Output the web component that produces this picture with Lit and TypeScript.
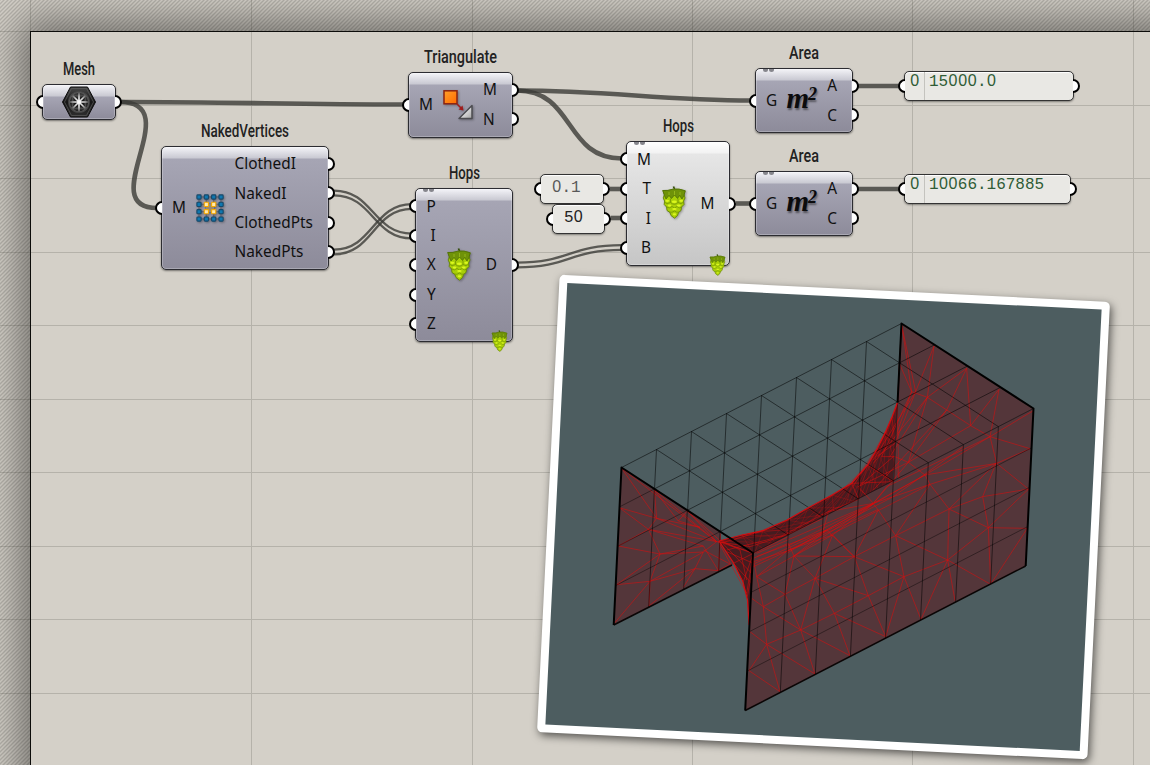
import { LitElement, html, svg, css, nothing } from "lit";
import { customElement, property } from "lit/decorators.js";

type Pt = [number, number];

interface GraphNode {
  title: string;
  titleWidth: number;
  x: number;
  y: number;
  w: number;
  h: number;
  inputs: string[];
  outputs: string[];
  icon: string;
  light?: boolean;
  ticks?: boolean;
  badge?: boolean;
}

interface Panel {
  x: number;
  y: number;
  w: number;
  index?: string;
  value: string;
  tone: string;
}

const NODES: GraphNode[] = [
  { title: "Mesh", titleWidth: 32, x: 41.5, y: 84, w: 74.5, h: 36, inputs: [""], outputs: [""], icon: "mesh" },
  { title: "NakedVertices", titleWidth: 88, x: 161, y: 146, w: 168, h: 124, inputs: ["M"], outputs: ["ClothedI", "NakedI", "ClothedPts", "NakedPts"], icon: "verts" },
  { title: "Triangulate", titleWidth: 73, x: 408, y: 72, w: 105, h: 65.5, inputs: ["M"], outputs: ["M", "N"], icon: "tri" },
  { title: "Hops", titleWidth: 31, x: 415.4, y: 188, w: 97.5, h: 154.4, inputs: ["P", "I", "X", "Y", "Z"], outputs: ["D"], icon: "hop", ticks: true, badge: true },
  { title: "Hops", titleWidth: 31, x: 626, y: 141, w: 104.4, h: 125, inputs: ["M", "T", "I", "B"], outputs: ["M"], icon: "hop", light: true, ticks: true, badge: true },
  { title: "Area", titleWidth: 30, x: 755, y: 68, w: 98, h: 65, inputs: ["G"], outputs: ["A", "C"], icon: "area", ticks: true },
  { title: "Area", titleWidth: 30, x: 755, y: 171, w: 98, h: 65, inputs: ["G"], outputs: ["A", "C"], icon: "area", ticks: true },
];

const PANELS: Panel[] = [
  { x: 903.5, y: 71, w: 170, index: "0", value: "15000.0", tone: "green" },
  { x: 903.5, y: 174, w: 167, index: "0", value: "10066.167885", tone: "green" },
  { x: 540.4, y: 174, w: 64, value: "0.1", tone: "grey" },
  { x: 552.4, y: 203.5, w: 53, value: "50", tone: "ink" },
];

const WIRES = [
  "M122,102 C240,102 290,104.5 404,104.5",
  "M120,102 C188,102 93,208 157,208",
  "M517,90.5 C610,90.5 660,100.5 752,100.5",
  "M517,90.5 C575,90.5 564,158.5 622,158.5",
  "M858,86 H899",
  "M858,189 H899",
  "M736,203.5 H751",
  "M610,189 H621",
  "M611,218 H621",
];

const LISTS: [number, number, number, number][] = [
  [334, 193, 412, 236],
  [334, 252, 412, 206.5],
  [517, 265, 622, 247.5],
];

const HOP = svg`
  <path d="M12.300 4 L10.600 .8 L12.300 .2 L13.500 4Z" fill="#304a06"/>
  <path d="M.8 4.500 Q6 5 11 3.200 Q17 2.400 23.200 4.800 L22 8.500 L23 12 L21.600 15 L22 18.500 L19.500 21 L19 24.500 L16.500 26.500 L15.500 29.500 L12.500 32.200 L9 29.500 L8 26.500 L5 24.500 L4.600 21 L2.200 18.500 L2.600 15 L1.200 12 L2.400 8.500Z" fill="#a9cf08" stroke="#64820a" stroke-width=".9"/>
  <path d="M.8 4.500 Q6 5 11 3.200 Q17 2.400 23.200 4.800 L22 9.500 L20 13 L17.500 9.500 L15.500 12.500 L12.500 9 L9.500 12.500 L7 9.500 L4 13 L2.400 9.500Z" fill="#6f9208" stroke="#4b6a08" stroke-width=".7"/>
  <path d="M12.500 5 V9 M7 6 V9 M18 6 V9" stroke="#93b51a" stroke-width="1"/>
  <g fill="none" stroke="#7a9b06" stroke-width=".9">
    <path d="M2 16 Q5 19 8.500 16.500 Q12.500 20 16 16.500 Q19 19 22 16"/>
    <path d="M4.500 21 Q7.500 23 10 20.500 Q12.500 23.500 15 20.500 Q17.500 23 20 21"/>
    <path d="M7.500 26 Q10 27 12.500 25 Q15 27 17 26"/><path d="M8.500 12.500 V16.500 M16 12.500 V16.500"/>
  </g>
  <g fill="#dcf71e">
    <ellipse cx="5.300" cy="14.800" rx="2" ry="1.100"/><ellipse cx="12.300" cy="15.800" rx="2.500" ry="1.300"/><ellipse cx="19.200" cy="14.800" rx="1.900" ry="1.100"/>
    <ellipse cx="7.500" cy="19.600" rx="1.900" ry="1.100"/><ellipse cx="16.800" cy="19.600" rx="1.900" ry="1.100"/><ellipse cx="12.400" cy="23" rx="2.200" ry="1.100"/><ellipse cx="12.400" cy="28.300" rx="1.800" ry="1.100"/>
  </g>`;

const GRID4 = [0, 1, 2, 3];

const ICONS: Record<string, unknown> = {
  hop: html`<svg class="icon hop" width="24" height="33" viewBox="0 0 24 33">${HOP}</svg>`,
  verts: html`<svg class="icon" width="28" height="28" viewBox="0 0 28 28">
    <path d="M3 3H25V25H3Z M10.300 3V25 M17.700 3V25 M3 10.300H25 M3 17.700H25" fill="none" stroke="#5c6170" stroke-width="1.300"/>
    <rect x="10" y="10" width="8" height="8" fill="#9a8a6c"/>
    ${GRID4.map((i) => GRID4.map((j) => {
      const inner = i > 0 && i < 3 && j > 0 && j < 3;
      return svg`<rect x=${0.9 + i * 7.35} y=${0.9 + j * 7.35} width="4.200" height="4.200" rx=".8" fill=${inner ? "#ffe9ae" : "#1077b0"} stroke=${inner ? "#f5a800" : "#164869"} stroke-width="1.100"/>`;
    }))}</svg>`,
  tri: html`<svg class="icon" width="32" height="32" viewBox="0 0 32 32">
    <defs><linearGradient id="o" x1="0" y1="0" x2="1" y2="1"><stop offset="0" stop-color="#ffa12a"/><stop offset="1" stop-color="#ff6a00"/></linearGradient>
    <linearGradient id="s" x1="0" y1="0" x2="1" y2="1"><stop offset=".3" stop-color="#f4f4f4"/><stop offset="1" stop-color="#a2a2a2"/></linearGradient></defs>
    <rect x="2" y="1.800" width="13" height="13" fill="url(#o)" stroke="#8a2310" stroke-width="1.500"/>
    <path d="M15 15 L19 19" stroke="#a01c1c" stroke-width="1.600"/><path d="M21.500 21.500 L16.500 20.500 L20.500 16.500Z" fill="#a01c1c"/>
    <path d="M17 29.500 L30 16.500 V29.500Z" fill="url(#s)" stroke="#4c4c50" stroke-width="1.500" stroke-linejoin="round"/></svg>`,
  area: html`<span class="area">m<sup>2</sup></span>`,
  mesh: html`<svg class="hex" width="34" height="32" viewBox="0 0 34 32">
    <defs><linearGradient id="h" x1="0" y1="0" x2="0" y2="1"><stop offset="0" stop-color="#4a4a4a"/><stop offset=".5" stop-color="#161616"/><stop offset="1" stop-color="#303030"/></linearGradient>
    <radialGradient id="w"><stop offset="0" stop-color="#fff"/><stop offset=".5" stop-color="#d0d0d0"/><stop offset="1" stop-color="#4a4a4a"/></radialGradient></defs>
    <path d="M8.500 1 H25.500 L33.500 16 L25.500 31 H8.500 L0.500 16Z" fill="url(#h)" stroke="#0c0c0c"/>
    <path d="M9.500 2.500 H24.500 L31.500 16 L24.500 29.500 H9.500 L2.500 16Z" fill="none" stroke="#5d5d5d" stroke-width=".7"/>
    <g fill="none" stroke="url(#w)" stroke-width="1.700">
      <rect x="10.500" y="9.500" width="13" height="13"/><path d="M17 6 V26.010 M7 16 H27.010 M10.500 9.500 L23.500 22.500 M23.500 9.500 L10.500 22.500"/>
      <circle cx="17" cy="16" r="10"/>
    </g></svg>`,
};

/* Projected box corners and their unit steps. */
const A: Pt = [621.5, 467.5];
const B: Pt = [753, 553];
const C: Pt = [1033.5, 408.5];
const D: Pt = [901.5, 323.5];
const DOWN: Pt = [-7.8, 157.5];

const mix = (p: Pt, q: Pt, t: number): Pt => [p[0] + (q[0] - p[0]) * t, p[1] + (q[1] - p[1]) * t];
const drop = (p: Pt, t: number): Pt => [p[0] + DOWN[0] * t, p[1] + DOWN[1] * t];
const seg = (p: Pt, q: Pt) => `M${p[0].toFixed(1)},${p[1].toFixed(1)}L${q[0].toFixed(1)},${q[1].toFixed(1)}`;
const poly = (...p: Pt[]) => "M" + p.map((q) => q.join(",")).join("L") + "Z";

function roofWires(): string {
  let d = "";
  for (let j = 0; j <= 4; j++) d += seg(mix(A, B, j / 4), mix(D, C, j / 4));
  for (let i = 1; i < 8; i++) d += seg(mix(A, D, i / 8), mix(B, C, i / 8));
  for (let i = 1; i <= 8; i++) {
    const n = Math.min(i, 4);
    d += seg(mix(A, D, i / 8), drop(mix(A, D, i / 8), n / 4));
  }
  return d;
}

function wallColumns(): string {
  let d = "";
  for (let i = 1; i < 8; i++) d += seg(mix(B, C, i / 8), drop(mix(B, C, i / 8), 1));
  for (let i = 1; i < 4; i++) d += seg(mix(A, B, i / 4), drop(mix(A, D, i / 8), 1));
  return d;
}

function wallRows(): string {
  let d = "";
  for (let k = 1; k < 4; k++) {
    d += seg(drop(B, k / 4), drop(C, k / 4));
    d += seg(drop(A, k / 4), mix(A, B, k / 4));
  }
  return d;
}

/* Facet edges, in thirds of a pixel from each patch origin. */
const PATCHES: { o: Pt; lines: string[] }[] = [
  {
    o: [600, 440],
    lines: [
      "65,85 170,235 163,150 235,243 262,213 350,305 170,235 58,203 145,268 55,318 180,342 145,268 350,305",
      "145,268 170,235", "145,268 310,318 180,342 50,434 150,424 180,342", "150,424 42,551", "150,424 147,498 285,386 150,424",
      "163,150 350,305", "180,342 310,336 285,386 355,392 362,280", "65,85 350,305", "250,442 285,386",
      "310,336 350,305", "262,213 358,300", "310,318 355,392 390,372 310,330", "150,424 310,336", "170,235 300,262 235,243",
      "355,305 460,340", "355,305 440,460 460,340", "400,370 460,340 430,425", "360,310 490,272", "380,335 460,370 442,470",
      "360,300 420,330 440,420", "370,312 455,400", "350,305 450,320 560,285", "400,370 455,430", "460,340 565,290", "380,330 500,300 570,280",
    ],
  },
  {
    o: [730, 300],
    lines: [
      "515,75 557,275", "515,75 545,275 508,190", "545,275 592,292", "612,138 557,275", "612,138 592,292 710,205 722,377 592,292",
      "710,205 650,330 535,487 592,292 430,490", "807,268 722,377 780,410 807,268", "910,332 780,410 900,446 800,490 780,410 585,525 535,487",
      "722,377 535,487", "800,490 600,553 585,525 800,490 895,567", "557,275 430,480", "545,275 455,470 495,470 535,487", "508,190 503,310",
      "592,292 480,470", "780,410 470,560 430,610", "535,487 430,610 585,525", "430,610 600,553", "290,690 430,610 385,560 535,487",
      "600,553 300,705", "585,525 290,690 170,760", "430,610 170,740", "430,610 80,760", "490,470 385,560", "650,330 430,570",
      "430,610 295,635 280,690", "372,770 290,690 190,770", "490,590 180,750 70,785", "290,690 80,770", "170,705 280,655", "700,440 490,590",
      "445,628 70,800", "545,275 500,400", "557,275 495,430 440,470", "170,700 300,632 386,598 365,550 490,545 413,495",
    ],
  },
  {
    o: [740, 480],
    lines: [
      "50,290 70,380 80,493 120,635 27,572 80,493 30,455", "50,290 135,343 70,380 35,355", "70,380 182,450 80,493 225,582 182,450 135,343 162,228 225,295 135,343",
      "225,295 182,450 330,527 283,400 182,450", "225,295 283,400 385,347 225,295 343,230 162,228", "343,230 385,347 437,470 283,400",
      "385,347 492,290 343,230 467,167 492,290 437,470", "492,290 543,418 623,240 492,290", "467,167 623,240 627,87 467,167 415,90 343,230 278,165 225,295",
      "415,90 400,72 278,165 162,228 145,190", "623,240 645,362", "623,240 752,313 745,143 623,240", "627,87 745,143 728,50 627,87 768,-50 728,50",
      "745,143 862,145 752,313", "745,143 866,27 728,50", "627,87 570,13 467,167", "50,290 162,228", "50,290 145,210 278,165", "50,290 40,235 145,190", "162,228 400,72", "45,250 260,150",
    ],
  },
];

const CURVE: Pt[] = [
  [897.3, 403], [892, 417], [886, 431], [877, 449], [867.7, 465], [852, 483], [832, 495], [808, 508], [787, 520], [763, 530.7], [742, 535], [719, 541],
];

function band(): string {
  let d = "";
  CURVE.forEach((p, i) => {
    const t = 0.5 - (i / (CURVE.length - 1)) * 0.48;
    for (const k of [-0.1, -0.03, 0.05, 0.12]) d += seg(p, mix(B, C, Math.min(0.52, Math.max(0, t + k))));
    if (i + 2 < CURVE.length) d += seg(p, mix(CURVE[i + 2], mix(B, C, t), 0.2));
  });
  return d;
}

const points = (list: Pt[]) => list.map((p) => p.join(",")).join(" ");

@customElement("graph-port")
export class GraphPort extends LitElement {
  @property({ reflect: true }) side = "in";
  static styles = css`
    :host { display: block; box-sizing: border-box; width: 7px; height: 14px; background: #fff; border: 2.9px solid #000; }
    :host([side="in"]) { border-right: 0; border-radius: 7px 0 0 7px; }
    :host([side="out"]) { border-left: 0; border-radius: 0 7px 7px 0; }
  `;
  render() {
    return nothing;
  }
}

@customElement("app-root")
export class AppRoot extends LitElement {
  static styles = css`
    :host {
      display: block; position: relative; width: 1150px; height: 765px; overflow: hidden;
      font-family: "Noto Sans", sans-serif; color: #111; background: #d4d0c8;
    }
    .layer { position: absolute; left: 0; top: 0; width: 1150px; height: 765px; }
    .hatch { background: repeating-linear-gradient(135deg, rgba(0,0,0,.08) 0 1.4px, rgba(255,255,255,.05) 1.4px 2.83px); }
    .sheet {
      position: absolute; left: 30px; top: 31px; width: 1300px; height: 900px; box-sizing: border-box;
      border: 1px solid #000; background: #d4d0c8; box-shadow: 0 0 36px 9px rgba(0,0,0,.45);
    }
    .grid path { stroke: rgba(60,60,50,.2); stroke-width: 1; fill: none; shape-rendering: crispEdges; }
    .wires path { fill: none; stroke: #3b3b37; stroke-opacity: .8; stroke-width: 4.6; }
    .wires .list { stroke-width: 2.3; }
    .node, .panel { position: absolute; display: flex; }
    .body {
      flex: 1; display: flex; align-items: stretch; justify-content: space-between; box-sizing: border-box; border: 1.4px solid #2c2c31;
      border-radius: 5px; background: linear-gradient(#f4f4f8, #c9c9d2 11px, #a6a5b4 12px, #8d8b9a);
      box-shadow: 0 1px 2px rgba(0,0,0,.45), inset 0 0 0 1px rgba(255,255,255,.25);
    }
    .light .body { background: linear-gradient(#fff, #f2f2f2 11px, #e6e6e6 12px, #c6c6c6); }
    .ports { width: 0; position: relative; display: flex; flex-direction: column; justify-content: center; }
    .slot { height: 29.45px; display: flex; align-items: center; }
    .ports.in .slot { justify-content: flex-end; }
    .ports.in graph-port { margin-right: -1px; }
    .ports.out graph-port { margin-left: -1px; }
    .ports graph-port { flex: none; }
    .labels { display: flex; flex-direction: column; justify-content: center; font-size: 15.4px; line-height: 29.45px; }
    .labels span { height: 29.45px; }
    .labels.in { padding-left: 10px; text-align: right; }
    .labels.out { padding-right: 15px; }
    .middle { flex: 1; display: flex; align-items: center; justify-content: center; }
    .title { position: absolute; left: 0; right: 0; bottom: 100%; height: 31px; display: flex; justify-content: center; }
    .title text { font: 500 18.5px Roboto, sans-serif; fill: #222; }
    .ticks { position: absolute; left: 8px; top: 1px; display: flex; gap: 1px; }
    .ticks i { width: 5px; height: 2.5px; border-radius: 0 0 3px 3px; background: #86868c; }
    .badge { position: absolute; right: 4.5px; bottom: -10px; }
    .hop { margin: 0 3px 2px 0; }
    .area { font: italic bold 29px/1 "Liberation Serif", serif; color: #0b0b0d; text-shadow: 1px 2px 2px rgba(0,0,0,.45); display: flex; margin: -5px 0 0 -1px; }
    .area sup { font-size: 18px; line-height: 1; margin: 1px 0 0 -1px; vertical-align: 0; }
    .icon { filter: drop-shadow(1px 1px 1px rgba(0,0,0,.3)); }
    .panel { height: 30px; }
    .box {
      flex: 1; display: flex; box-sizing: border-box; border: 1.4px solid #333; border-radius: 5px; background: #e9e8e4;
      box-shadow: 0 1px 2px rgba(0,0,0,.4), inset 0 1px 1px #fff; font: 16px/18px "Liberation Mono", monospace; padding-left: 10.5px;
    }
    .green .box { color: #2f5c36; padding-left: 5.5px; }
    .grey .box { color: #585858; padding-top: 3px; }
    .ink .box { color: #222; padding-top: 3px; }
    .cell { display: inline-block; width: 9.6px; text-align: center; }
    .zero { font-family: "Liberation Sans", sans-serif; }
    .index { border-right: 1px solid #c4c3be; width: 14px; margin-right: 4px; }
    .photo {
      position: absolute; left: 548px; top: 288px; width: 551px; height: 458px; box-sizing: border-box; border: 8px solid #fff;
      border-radius: 5px; background: #4d5d60; transform: rotate(2.84deg); box-shadow: 2px 3px 9px rgba(0,0,0,.6);
    }
    .wall { fill: #54363a; }
    .film { fill: #451c20; }
    .edge { fill: none; stroke: #000; stroke-width: 2; stroke-linejoin: round; }
    .foot { fill: none; stroke: #0a0505; stroke-width: 1.5; }
    .mesh { fill: none; stroke: #000; stroke-opacity: .62; stroke-width: .85; }
    .rows { stroke-opacity: .48; }
    .facets { fill: none; stroke: #e00c0c; stroke-opacity: .72; stroke-width: .75; }
    .rim { fill: none; stroke: #d50d10; stroke-width: 1.2; }
    .dense { fill: none; stroke: #c90f12; stroke-opacity: .5; stroke-width: .6; }
  `;

  private cells(s: string) {
    return [...s].map((c) => html`<span class="cell ${c === "0" ? "zero" : ""}">${c}</span>`);
  }

  private node(n: GraphNode) {
    return html`<div class="node ${n.light ? "light" : ""}" style="left:${n.x}px;top:${n.y}px;width:${n.w}px;height:${n.h}px">
      <div class="title"><svg width=${n.titleWidth} height="31" overflow="visible">
        <text x="0" y="22" textLength=${n.titleWidth} lengthAdjust="spacingAndGlyphs">${n.title}</text></svg></div>
      <div class="ports in">${n.inputs.map(() => html`<div class="slot"><graph-port side="in"></graph-port></div>`)}</div>
      <div class="body">
        ${n.icon === "mesh" ? nothing : html`<div class="labels in">${n.inputs.map((l) => html`<span>${l}</span>`)}</div>`}
        <div class="middle">${ICONS[n.icon]}</div>
        ${n.icon === "mesh" ? nothing : html`<div class="labels out">${n.outputs.map((l) => html`<span>${l}</span>`)}</div>`}
      </div>
      <div class="ports out">${n.outputs.map(() => html`<div class="slot"><graph-port side="out"></graph-port></div>`)}</div>
      ${n.ticks ? html`<div class="ticks"><i></i><i></i></div>` : nothing}
      ${n.badge ? html`<svg class="badge" width="17" height="22" viewBox="0 0 24 33">${HOP}</svg>` : nothing}
    </div>`;
  }

  private panel(p: Panel) {
    return html`<div class="panel ${p.tone}" style="left:${p.x}px;top:${p.y}px;width:${p.w}px">
      <div class="ports in"><div class="slot"><graph-port side="in"></graph-port></div></div>
      <div class="box">${p.index ? html`<span class="index">${this.cells(p.index)}</span>` : nothing}<span>${this.cells(p.value)}</span></div>
      <div class="ports out"><div class="slot"><graph-port side="out"></graph-port></div></div>
    </div>`;
  }

  render() {
    const grid =
      [30, 251, 472, 692, 912, 1133].map((x) => `M${x + 0.5},0V765`).join("") +
      [31, 105, 178, 252, 325, 399, 472, 546, 619, 693].map((y) => `M0,${y + 0.5}H1150`).join("");
    return html`
      <div class="sheet"></div>
      <svg class="layer">
        <defs><pattern id="hatch" width="4" height="4" patternUnits="userSpaceOnUse">
          <path d="M-1,1 L1,-1 M-1,5 L5,-1 M3,5 L5,3" stroke="#000" stroke-opacity=".15" stroke-width="1.3"/>
        </pattern></defs>
        <path d="M0,0 H1150 V31 H30 V765 H0 Z" fill="url(#hatch)"/>
      </svg>
      <svg class="layer grid"><path d=${grid} /></svg>
      <svg class="layer wires">
        ${WIRES.map((d) => svg`<path d=${d}/>`)}
        ${LISTS.map(([x1, y1, x2, y2]) => {
          const m = (x1 + x2) / 2;
          return [-2.4, 2.4].map((o) => svg`<path class="list" d="M${x1},${y1 + o} C${m},${y1 + o} ${m},${y2 + o} ${x2},${y2 + o}"/>`);
        })}
      </svg>
      ${NODES.map((n) => this.node(n))}
      ${PANELS.map((p) => this.panel(p))}
      <div class="photo"></div>
      <svg class="layer">
        <path class="wall" d=${poly(A, [720, 531.5], [722, 546], [734, 564], drop(A, 1))} />
        <path class="wall" d=${poly(B, C, drop(C, 1), drop(B, 1))} />
        <path class="wall" d=${poly(D, C, B, [893.7, 481])} />
        <path class="film" d=${poly(...CURVE, B, mix(B, C, 0.5))} />
        <path class="film" d=${poly([719, 541], [733, 562], [743, 582], [747.5, 600], [749, 625], B)} />
        <path class="dense" d=${band()} />
        ${PATCHES.map((p) => svg`<g class="facets">${p.lines.map((l) => svg`<polyline points=${points(
          l.split(" ").map((s) => {
            const [u, v] = s.split(",").map(Number);
            return [p.o[0] + u / 3, p.o[1] + v / 3] as Pt;
          })
        )}/>`)}</g>`)}
        <path class="mesh" d=${roofWires() + wallColumns()} />
        <path class="mesh rows" d=${wallRows()} />
        <polyline class="rim" points=${points(CURVE)} />
        <polyline class="rim" points="719,541 733,562 743,582 747.500,600 749,625" />
        <polyline class="foot" points=${points([drop(A, 1), [732, 565]])} />
        <polyline class="foot" points=${points([drop(B, 1), drop(C, 1)])} />
        <polyline class="edge" points=${points([drop(A, 1), A, B, drop(B, 1)])} />
        <polyline class="edge" points=${points([[897.6, 402], D, C, drop(C, 1)])} />
      </svg>
    `;
  }
}
